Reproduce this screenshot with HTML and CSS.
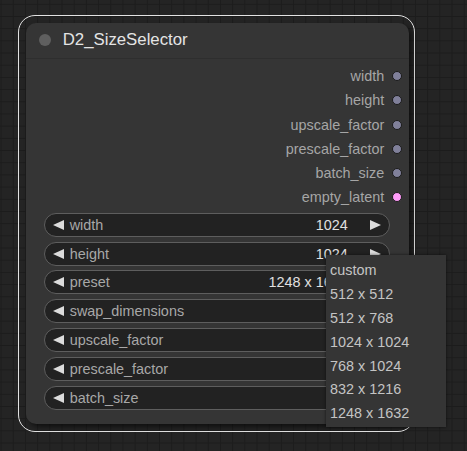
FILE: index.html
```html
<!DOCTYPE html>
<html>
<head>
<meta charset="utf-8">
<link rel="stylesheet" href="styles.css">
</head>
<body>
<div class="canvas">
  <div class="selection">
    <div class="node">
      <div class="title">
        <span class="title-dot"></span>
        <span class="title-text">D2_SizeSelector</span>
      </div>
      <div class="outputs">
        <div class="slot"><span class="slot-label">width</span><span class="slot-dot"></span></div>
        <div class="slot"><span class="slot-label">height</span><span class="slot-dot"></span></div>
        <div class="slot"><span class="slot-label">upscale_factor</span><span class="slot-dot"></span></div>
        <div class="slot"><span class="slot-label">prescale_factor</span><span class="slot-dot"></span></div>
        <div class="slot"><span class="slot-label">batch_size</span><span class="slot-dot"></span></div>
        <div class="slot"><span class="slot-label">empty_latent</span><span class="slot-dot latent"></span></div>
      </div>
      <div class="widgets">
        <div class="widget"><span class="arrow left"></span><span class="w-label">width</span><span class="w-value">1024</span><span class="arrow right"></span></div>
        <div class="widget"><span class="arrow left"></span><span class="w-label">height</span><span class="w-value">1024</span><span class="arrow right"></span></div>
        <div class="widget"><span class="arrow left"></span><span class="w-label">preset</span><span class="w-value">1248 x 1632</span><span class="arrow right"></span></div>
        <div class="widget"><span class="arrow left"></span><span class="w-label">swap_dimensions</span><span class="arrow right"></span></div>
        <div class="widget"><span class="arrow left"></span><span class="w-label">upscale_factor</span><span class="arrow right"></span></div>
        <div class="widget"><span class="arrow left"></span><span class="w-label">prescale_factor</span><span class="arrow right"></span></div>
        <div class="widget"><span class="arrow left"></span><span class="w-label">batch_size</span><span class="arrow right"></span></div>
      </div>
    </div>
  </div>
  <div class="menu">
    <div class="menu-item">custom</div>
    <div class="menu-item">512 x 512</div>
    <div class="menu-item">512 x 768</div>
    <div class="menu-item">1024 x 1024</div>
    <div class="menu-item">768 x 1024</div>
    <div class="menu-item">832 x 1216</div>
    <div class="menu-item">1248 x 1632</div>
  </div>
</div>
</body>
</html>
```

FILE: styles.css
```css
html, body {
  margin: 0;
  padding: 0;
}
body {
  width: 467px;
  height: 451px;
  overflow: hidden;
  background-color: #242424;
  background-image:
    linear-gradient(#1c1c1c 1px, transparent 1px),
    linear-gradient(90deg, #1c1c1c 1px, transparent 1px);
  background-size: 12.2px 12.2px;
  background-position: 0.6px 3.8px;
  font-family: "Liberation Sans", Arial, sans-serif;
}
.canvas {
  position: relative;
  padding: 15px 0 0 18px;
}
.selection {
  width: 397px;
  height: 417px;
  box-sizing: border-box;
  border: 1.3px solid #e2e2e2;
  border-radius: 17px;
  padding: 6.7px 6px 0 6.7px;
}
.node {
  width: 383px;
  height: 401px;
  background: #353535;
  border-radius: 10px;
  box-shadow: 3px 3px 5px rgba(0, 0, 0, 0.55);
  display: flex;
  flex-direction: column;
}
.title {
  height: 36px;
  box-sizing: border-box;
  border-bottom: 1px solid #2e2e2e;
  display: flex;
  align-items: center;
  padding-left: 13px;
}
.title-dot {
  width: 12px;
  height: 12px;
  border-radius: 50%;
  background: #5f5f5f;
  margin-right: 12px;
}
.title-text {
  font-size: 16.8px;
  color: #e4e4e4;
}
.outputs {
  padding-top: 5.5px;
  display: flex;
  flex-direction: column;
}
.slot {
  height: 24.2px;
  display: flex;
  align-items: center;
  justify-content: flex-end;
  padding-right: 6.5px;
}
.slot-label {
  font-size: 14.4px;
  color: #a6a6a6;
  margin-right: 8px;
}
.slot-dot {
  width: 10px;
  height: 10px;
  box-sizing: border-box;
  border-radius: 50%;
  background: #80809a;
  border: 1px solid #1b1b1b;
}
.slot-dot.latent {
  background: #ff9cf9;
}
.widgets {
  padding: 3.5px 19px 0 18px;
  display: flex;
  flex-direction: column;
  gap: 4.8px;
}
.widget {
  height: 24px;
  box-sizing: border-box;
  border: 1px solid #5e5e5e;
  border-radius: 12px;
  background: #222222;
  display: flex;
  align-items: center;
  padding: 0 8px 0 8px;
  font-size: 14.4px;
}
.arrow {
  width: 0;
  height: 0;
  border-top: 5.5px solid transparent;
  border-bottom: 5.5px solid transparent;
}
.arrow.left {
  border-right: 11px solid #dcdcdc;
  margin-right: 6px;
}
.arrow.right {
  border-left: 11px solid #dcdcdc;
  margin-left: 22px;
}
.w-label {
  color: #a8a8a8;
  flex: 1;
}
.w-value {
  color: #e0e0e0;
}
.menu {
  position: absolute;
  left: 326px;
  top: 255px;
  width: 120px;
  height: 172px;
  box-sizing: border-box;
  background: #353535;
  box-shadow: 0 0 3px rgba(0, 0, 0, 0.6);
  padding: 4px 0 0 4px;
}
.menu-item {
  height: 23.9px;
  line-height: 23.9px;
  font-size: 14.4px;
  color: #c4c4c4;
}
```
